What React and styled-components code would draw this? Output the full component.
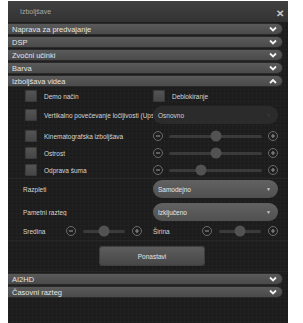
import React from "react";
import styled, { createGlobalStyle } from "styled-components";

const Global = createGlobalStyle`
  body {
    margin: 0;
    background: #ffffff;
    font-family: "Liberation Sans", Arial, sans-serif;
  }
`;

const Panel = styled.div`
  width: 280px;
  height: 322px;
  margin: 1px 0 0 8px;
  background-color: #1c1c1c;
  background-image:
    linear-gradient(rgba(255, 255, 255, 0.015) 1px, transparent 1px),
    linear-gradient(90deg, rgba(255, 255, 255, 0.015) 1px, transparent 1px);
  background-size: 4px 4px;
  display: flex;
  flex-direction: column;
  overflow: hidden;
`;

const TitleBar = styled.div`
  height: 21px;
  flex: none;
  display: flex;
  align-items: center;
  justify-content: space-between;
  padding: 0 4px 0 12px;
  background: linear-gradient(#404040, #333333);
  color: #a8a8a8;
  font-size: 7px;
`;

const Close = styled.span`
  color: #c8c8c8;
  font-size: 10px;
  font-weight: bold;
  margin-top: 4px;
`;

const Header = styled.div`
  height: 12px;
  flex: none;
  margin: 1px 5px 0 0;
  box-sizing: border-box;
  border: 1px solid #2a2a2a;
  border-left: none;
  border-radius: 0 7px 7px 0;
  background: linear-gradient(#5a5a5a, #4a4a4a);
  display: flex;
  align-items: center;
  justify-content: space-between;
  padding: 0 5px 0 4px;
  color: #e4e4e4;
  font-size: 7.5px;
`;

const Chevron = ({ up }) => (
  <svg width="8" height="6" viewBox="0 0 8 6">
    <path
      d={up ? "M1 5 L4 2 L7 5" : "M1 1.5 L4 4.5 L7 1.5"}
      fill="none"
      stroke="#f2f2f2"
      strokeWidth="1.8"
    />
  </svg>
);

const Content = styled.div`
  display: flex;
  flex-direction: column;
  padding-top: 2px;
`;

const Row = styled.div`
  display: flex;
  align-items: center;
  height: ${({ h }) => h}px;
  margin-top: ${({ mt }) => mt || 0}px;
`;

const Left = styled.div`
  width: 145px;
  flex: none;
  display: flex;
  align-items: center;
  padding-left: ${({ pl }) => pl}px;
  padding-right: 4px;
  box-sizing: border-box;
  overflow: hidden;
  white-space: nowrap;
`;

const Right = styled.div`
  width: 125px;
  flex: none;
  display: flex;
  align-items: center;
`;

const Box = styled.div`
  width: 12px;
  height: 12px;
  flex: none;
  border-radius: 2px;
  background: linear-gradient(#555555, #444444);
  box-shadow: inset 0 0 0 1px #3a3a3a;
  margin-right: 7px;
`;

const Label = styled.span`
  color: #d6d6d6;
  font-size: 6.5px;
  white-space: nowrap;
`;

const Select = styled.div`
  width: 125px;
  height: 18px;
  border-radius: 9px;
  box-sizing: border-box;
  display: flex;
  align-items: center;
  justify-content: space-between;
  padding: 0 7px 0 5px;
  font-size: 6.5px;
  color: ${({ dim }) => (dim ? "#cfcfcf" : "#e8e8e8")};
  background: ${({ dim }) =>
    dim ? "#2b2b2b" : "linear-gradient(#626262, #505050)"};
`;

const Caret = styled.span`
  font-size: 5px;
  color: ${({ dim }) => (dim ? "#3a3a3a" : "#c8c8c8")};
`;

const Round = styled.div`
  width: 8px;
  height: 8px;
  flex: none;
  border-radius: 50%;
  border: 1px solid #6a6a6a;
  display: flex;
  align-items: center;
  justify-content: center;
`;

const SliderWrap = styled.div`
  display: flex;
  align-items: center;
`;

const Track = styled.div`
  flex: 1;
  height: 3px;
  margin: 0 ${({ gap }) => gap}px;
  background: #3a3a3a;
  border-radius: 2px;
  position: relative;
`;

const Thumb = styled.div`
  position: absolute;
  top: 50%;
  width: 11px;
  height: 11px;
  border-radius: 50%;
  background: #525252;
  transform: translate(-50%, -50%);
`;

const Slider = ({ value, width, gap = 6 }) => (
  <SliderWrap style={{ width }}>
    <Round>
      <svg width="6" height="6" viewBox="0 0 6 6">
        <path d="M1 3 H5" stroke="#8a8a8a" strokeWidth="1.2" />
      </svg>
    </Round>
    <Track gap={gap}>
      <Thumb style={{ left: `${value}%` }} />
    </Track>
    <Round>
      <svg width="6" height="6" viewBox="0 0 6 6">
        <path d="M1 3 H5 M3 1 V5" stroke="#8a8a8a" strokeWidth="1.2" />
      </svg>
    </Round>
  </SliderWrap>
);

const Divider = styled.div`
  height: 1px;
  background: #262626;
  margin: ${({ m }) => m};
`;

const Half = styled.div`
  display: flex;
  align-items: center;
  width: ${({ w }) => w}px;
  padding: 0 ${({ pr }) => pr}px 0 ${({ pl }) => pl}px;
  box-sizing: border-box;
  justify-content: space-between;
`;

const ButtonRow = styled.div`
  display: flex;
  justify-content: center;
  padding: 5px 0 0 8px;
`;

const Button = styled.div`
  width: 106px;
  height: 20px;
  border-radius: 4px;
  background: linear-gradient(#5e5e5e, #464646);
  box-shadow: inset 0 0 0 1px #3e3e3e;
  color: #e6e6e6;
  font-size: 6.5px;
  display: flex;
  align-items: center;
  justify-content: center;
`;

const sections = ["Naprava za predvajanje", "DSP", "Zvočni učinki", "Barva"];

export default function App() {
  return (
    <>
      <Global />
      <Panel>
        <TitleBar>
          Izboljšave
          <Close>✕</Close>
        </TitleBar>
        {sections.map((s) => (
          <Header key={s}>
            {s}
            <Chevron />
          </Header>
        ))}
        <Header>
          Izboljšava videa
          <Chevron up />
        </Header>
        <Content>
          <Row h={12} mt={1}>
            <Left pl={17}>
              <Box />
              <Label>Demo način</Label>
            </Left>
            <Right>
              <Box />
              <Label>Deblokiranje</Label>
            </Right>
          </Row>
          <Row h={18} mt={4}>
            <Left pl={17}>
              <Box />
              <Label>Vertikalno povečevanje ločljivosti (Ups</Label>
            </Left>
            <Right>
              <Select dim>
                Osnovno
                <Caret dim>▼</Caret>
              </Select>
            </Right>
          </Row>
          <Row h={12} mt={6}>
            <Left pl={17}>
              <Box />
              <Label>Kinematografska izboljšava</Label>
            </Left>
            <Right>
              <Slider value={50} width={125} />
            </Right>
          </Row>
          <Row h={12} mt={5}>
            <Left pl={17}>
              <Box />
              <Label>Ostrost</Label>
            </Left>
            <Right>
              <Slider value={50} width={125} />
            </Right>
          </Row>
          <Row h={12} mt={5}>
            <Left pl={17}>
              <Box />
              <Label>Odprava šuma</Label>
            </Left>
            <Right>
              <Slider value={34} width={125} />
            </Right>
          </Row>
          <Divider m="2px 0 1px 0" />
          <Row h={18}>
            <Left pl={15}>
              <Label>Razpleti</Label>
            </Left>
            <Right>
              <Select>
                Samodejno
                <Caret>▼</Caret>
              </Select>
            </Right>
          </Row>
          <Row h={18} mt={5}>
            <Left pl={15}>
              <Label>Pametni razteg</Label>
            </Left>
            <Right>
              <Select>
                Izključeno
                <Caret>▼</Caret>
              </Select>
            </Right>
          </Row>
          <Row h={12} mt={4}>
            <Half w={145} pl={15} pr={11}>
              <Label>Sredina</Label>
              <Slider value={50} width={76} gap={7} />
            </Half>
            <Half w={125} pl={0} pr={0}>
              <Label>Širina</Label>
              <Slider value={50} width={76} gap={7} />
            </Half>
          </Row>
          <Divider m="3px 0 0 0" />
          <ButtonRow>
            <Button>Ponastavi</Button>
          </ButtonRow>
          <Divider m="5px 0 0 0" />
        </Content>
        <Header>
          AI2HD
          <Chevron />
        </Header>
        <Header>
          Časovni razteg
          <Chevron />
        </Header>
      </Panel>
    </>
  );
}
